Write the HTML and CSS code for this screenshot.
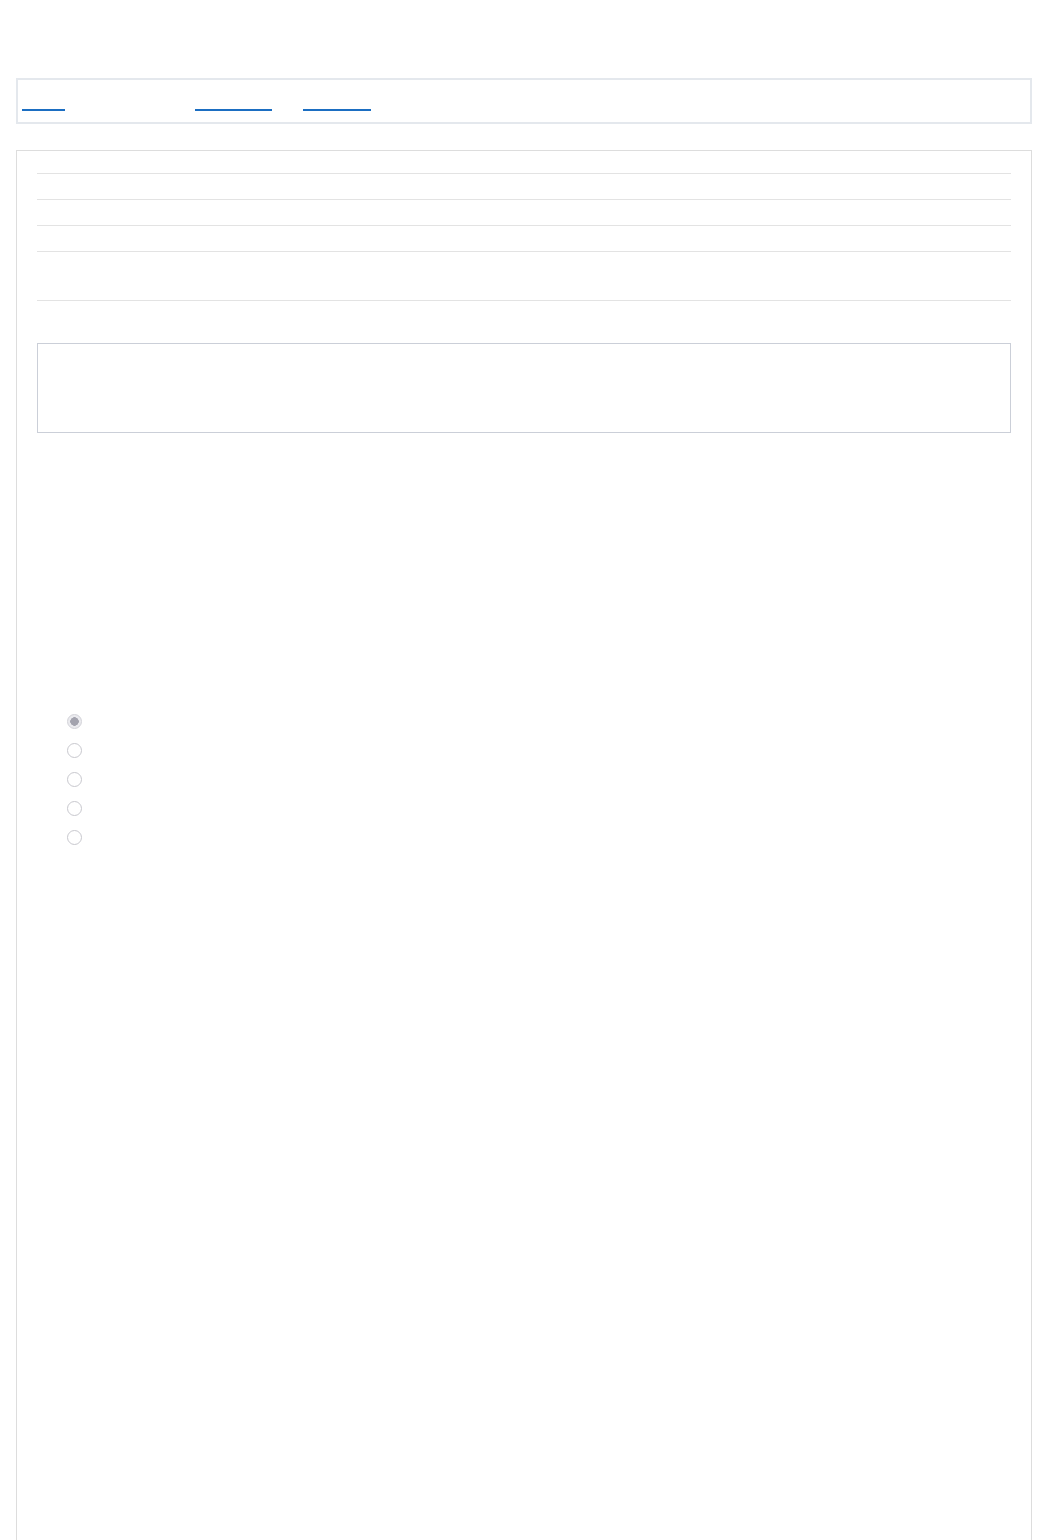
FILE: index.html
```html
<!DOCTYPE html>
<html>
  <head>
    <title>Settings</title>
    <link rel="stylesheet" href="styles.css">
  </head>
  <body>
    <div class="page">
      <nav class="nav">
        <a href="#" class="link link-first"></a>
        <a href="#" class="link link-second"></a>
        <a href="#" class="link link-third"></a>
      </nav>

      <div class="panel">
        <div class="rows">
          <div class="row"></div>
          <div class="row"></div>
          <div class="row"></div>
          <div class="row row-tall"></div>
        </div>

        <div class="box"></div>

        <ul class="options">
          <li><input type="radio" name="opt" checked disabled /></li>
          <li><input type="radio" name="opt" disabled /></li>
          <li><input type="radio" name="opt" disabled /></li>
          <li><input type="radio" name="opt" disabled /></li>
          <li><input type="radio" name="opt" disabled /></li>
        </ul>
      </div>
    </div>
  </body>
</html>
```

FILE: styles.css
```css
body {
  margin: 0;
  font-family: "Liberation Sans", Arial, sans-serif;
  background-color: #ffffff;
}

.page {
  padding: 78px 16px 0;
}

.nav {
  display: flex;
  align-items: flex-start;
  height: 42px;
  padding-left: 4px;
  border: 2px solid #e4e8ed;
}

.link {
  display: block;
  height: 2px;
  margin-top: 29px;
  background-color: #1b6ec2;
}

.link-first {
  width: 43px;
}

.link-second {
  width: 77px;
  margin-left: 130px;
}

.link-third {
  width: 68px;
  margin-left: 31px;
}

.panel {
  margin-top: 26px;
  padding: 0 20px;
  min-height: 1400px;
  border: 1px solid #dddddd;
  border-bottom: none;
}

.rows {
  margin-top: 22px;
  border-bottom: 1px solid #e3e3e3;
}

.row {
  height: 25px;
  border-top: 1px solid #e3e3e3;
}

.row-tall {
  height: 48px;
}

.box {
  margin-top: 42px;
  height: 88px;
  border: 1px solid #cbcfd8;
}

.options {
  list-style: none;
  margin: 281px 0 0;
  padding: 0 0 0 30px;
}

.options li {
  height: 29px;
}

.options input {
  appearance: none;
  display: block;
  box-sizing: border-box;
  width: 15px;
  height: 15px;
  margin: 0;
  border: 1px solid #c8c8ce;
  border-radius: 50%;
  background-color: #ffffff;
}

.options input:checked {
  border-color: #d2d2d8;
  background: radial-gradient(circle, #a3a3ae 0 4px, #ebebef 4.5px);
}
```
